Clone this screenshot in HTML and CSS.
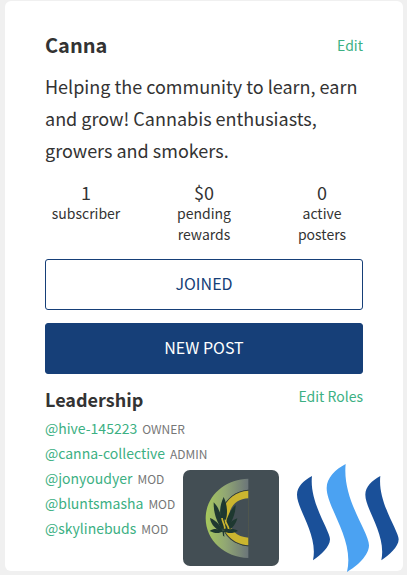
FILE: index.html
```html
<!DOCTYPE html>
<html lang="en">
<head>
    <meta charset="UTF-8">
    <meta name="viewport" content="width=device-width, initial-scale=1.0">
    <title>Canna</title>
    <link rel="stylesheet" href="styles.css">
</head>
<body>

    <main class="card">
        <header class="card-header">
            <h1>Canna</h1>
            <a href="#edit">Edit</a>
        </header>
        <p class="about">Helping the community to learn, earn and grow! Cannabis enthusiasts, growers and smokers.</p>

        <!-- Community stats -->
        <div class="stats">
            <div class="stat"><span class="stat-number">1</span>subscriber</div>
            <div class="stat"><span class="stat-number">$0</span>pending rewards</div>
            <div class="stat"><span class="stat-number">0</span>active posters</div>
        </div>

        <div class="actions">
            <button type="button" class="button button-hollow">JOINED</button>
            <button type="button" class="button">NEW POST</button>
        </div>

        <!-- Leadership -->
        <section>
            <div class="team-header">
                <h2>Leadership</h2>
                <a href="#roles">Edit Roles</a>
            </div>
            <ul class="team">
                <li><a href="#hive-145223">@hive-145223</a> <span class="role">OWNER</span></li>
                <li><a href="#canna-collective">@canna-collective</a> <span class="role">ADMIN</span></li>
                <li><a href="#jonyoudyer">@jonyoudyer</a> <span class="role">MOD</span></li>
                <li><a href="#bluntsmasha">@bluntsmasha</a> <span class="role">MOD</span></li>
                <li><a href="#skylinebuds">@skylinebuds</a> <span class="role">MOD</span></li>
            </ul>
        </section>

        <div class="logos">
            <svg class="logo-canna" viewBox="0 0 288 288" role="img" aria-label="Canna">
                <defs>
                    <linearGradient id="ring" x1="0" y1="0" x2="1" y2="0">
                        <stop offset="0" stop-color="#a6c85c"/>
                        <stop offset="0.45" stop-color="#92a873"/>
                        <stop offset="1" stop-color="#6b7579"/>
                    </linearGradient>
                </defs>
                <rect width="288" height="288" rx="21" fill="#434e54"/>
                <path fill="url(#ring)" d="M196 26 C126 27 68 78 68 145 C68 211 126 263 196 264 L196 229 C151 226 113 191 113 145 C113 99 151 62 196 59 Z"/>
                <path fill="#343e3a" d="M196 59 C149 62 113 99 113 145 C113 191 149 226 196 229 L196 222 L196 66 Z"/>
                <path fill="#cbb52f" d="M196 62 C151 65 116 99 116 145 C116 191 151 223 196 226 Z"/>
                <path fill="#434e54" d="M197 85 C160 86 138 110 138 145 C138 179 160 202 197 203 Z"/>
                <!-- leaf -->
                <g fill="#1e3830">
                    <path d="M122 81 C112 101 109 126 113 142 L120 184 L129 148 C135 128 132 101 122 81 Z"/>
                    <path d="M92 97 C92 124 96 146 119 184 C121 156 113 117 92 97 Z"/>
                    <path d="M158 105 C136 125 129 151 122 184 C145 162 157 137 158 105 Z"/>
                    <path d="M81 144 C84 166 101 180 120 187 C114 167 101 152 81 144 Z"/>
                    <path d="M163 145 C144 151 128 168 122 187 C143 181 158 166 163 145 Z"/>
                    <path d="M80 183 C94 173 109 178 120 184 C108 192 93 190 80 183 Z"/>
                    <path d="M165 183 C151 173 134 178 122 184 C136 192 151 190 165 183 Z"/>
                    <path d="M118 182 L123 182 L124 201 L120 196 Z"/>
                </g>
                <path fill="none" stroke="#cbb52f" stroke-width="5" d="M117 144 C118 155 124 160 126 176 M127 149 C126 159 136 166 137 177"/>
            </svg>
            <svg class="logo-steem" viewBox="30 26 306 324" role="img" aria-label="Steem">
                <path fill="#1a5099" d="M75 62 C50 75 30 95 30 118 C30 163 94 238 78 315 C100 300 129 275 129 252 C129 226 66 140 75 62 Z"/>
                <path fill="#4ba2f2" d="M176 26 C145 42 119 68 119 98 C119 158 203 252 180 350 C210 333 246 300 246 270 C246 230 165 132 176 26 Z"/>
                <path fill="#1a5099" d="M280 62 C255 75 235 95 235 118 C235 163 299 238 283 315 C305 300 335 275 335 252 C335 226 271 140 280 62 Z"/>
            </svg>
        </div>
    </main>

</body>
</html>
```
FILE: styles.css
```css
* {
    box-sizing: border-box;
}
body {
    font-family: "Noto Sans CJK SC", "Noto Sans", sans-serif;
    font-size: 14px;
    margin: 0;
    padding: 1px 4px 4px 5px;
    background-color: #f0f0f0;
    color: #333;
}
h1, h2, p, ul {
    margin: 0;
}
a {
    color: #3cb083;
    text-decoration: none;
}
.card {
    position: relative;
    padding: 28px 40px;
    background: #fff;
    border-radius: 6px;
}
.card-header, .team-header {
    display: flex;
    justify-content: space-between;
}
.card-header {
    line-height: 32px;
    margin-bottom: 9px;
}
h1 {
    font-size: 20px;
}
h2 {
    font-size: 18px;
}
.about {
    font-size: 18px;
    line-height: 32px;
}
.stats {
    display: grid;
    grid-template-columns: repeat(3, 1fr);
    column-gap: 36px;
    margin: 15px 0 14px;
    line-height: 21px;
    text-align: center;
}
.stat-number {
    display: block;
    font-size: 18px;
    line-height: 22px;
}
.actions {
    display: grid;
    gap: 13px;
    margin-bottom: 12px;
}
.button {
    width: 100%;
    height: 51px;
    padding: 0 0 3px;
    border: 1px solid #163f78;
    border-radius: 3px;
    background-color: #163f78;
    color: #fff;
    font-family: inherit;
    font-size: 16px;
    cursor: pointer;
}
.button-hollow {
    background-color: #fff;
    color: #163f78;
}
.team-header {
    line-height: 26px;
    margin-bottom: 4px;
}
.team-header a {
    line-height: 21px;
}
.team {
    padding: 0;
    list-style: none;
}
.team li {
    display: flex;
    align-items: baseline;
    gap: 5px;
    height: 25px;
    line-height: 25px;
}
.team li:last-child {
    margin-bottom: 2px;
}
.role {
    color: #777;
    font-size: 12px;
}
.logos {
    position: absolute;
    right: 4px;
    bottom: -1px;
    display: flex;
    align-items: center;
    gap: 18px;
}
.logo-canna {
    width: 96px;
    height: 96px;
}
.logo-steem {
    width: 102px;
    height: 108px;
}
```
